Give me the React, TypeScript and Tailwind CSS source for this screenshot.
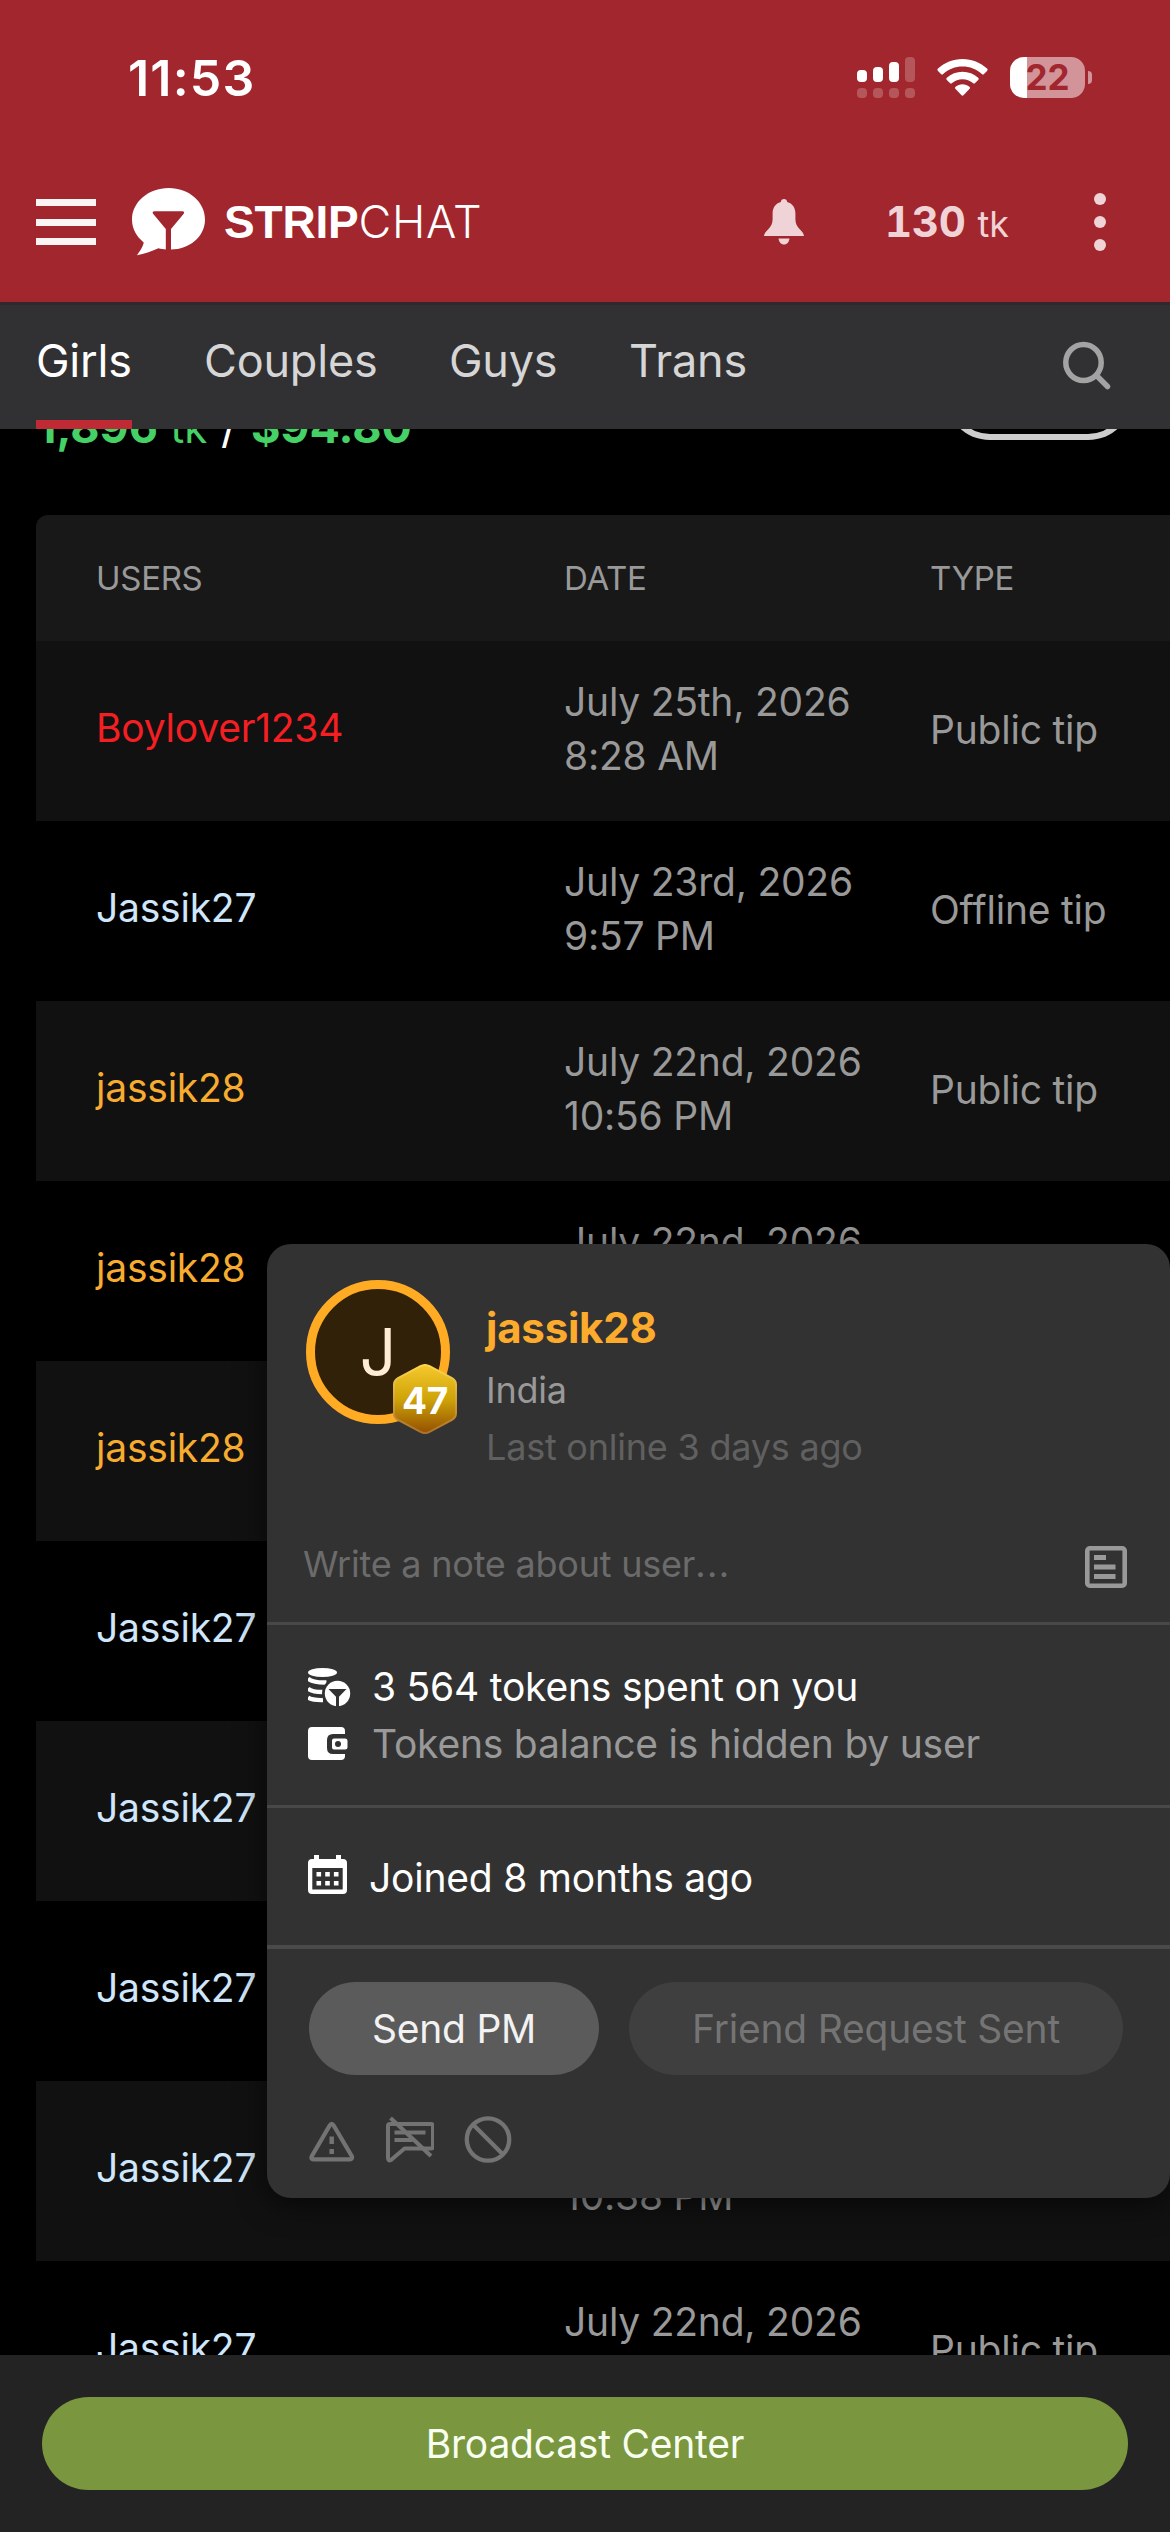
import React from "react";

type Row = { user: string; color: string; day: string; time: string; type: string };

const RED = "text-[#f41f22]";
const BLUE = "text-[#cfe6fb]";
const GOLD = "text-[#f7ac2f]";

const rows: Row[] = [
  { user: "Boylover1234", color: RED, day: "July 25th, 2026", time: "8:28 AM", type: "Public tip" },
  { user: "Jassik27", color: BLUE, day: "July 23rd, 2026", time: "9:57 PM", type: "Offline tip" },
  { user: "jassik28", color: GOLD, day: "July 22nd, 2026", time: "10:56 PM", type: "Public tip" },
  { user: "jassik28", color: GOLD, day: "July 22nd, 2026", time: "", type: "" },
  { user: "jassik28", color: GOLD, day: "", time: "", type: "" },
  { user: "Jassik27", color: BLUE, day: "", time: "", type: "" },
  { user: "Jassik27", color: BLUE, day: "", time: "", type: "" },
  { user: "Jassik27", color: BLUE, day: "", time: "", type: "" },
  { user: "Jassik27", color: BLUE, day: "", time: "10:38 PM", type: "" },
  { user: "Jassik27", color: BLUE, day: "July 22nd, 2026", time: "", type: "Public tip" },
];

function Signal() {
  return (
    <svg className="block h-[42px] w-[58px]" viewBox="0 0 58 42" fill="#fff">
      <rect x="0" y="13" width="10" height="12" rx="4" />
      <rect x="16" y="10" width="10" height="15" rx="4" />
      <rect x="32" y="5" width="10" height="20" rx="4" />
      <g opacity=".22">
        <rect x="48" y="0" width="10" height="25" rx="4" />
        <rect x="0" y="31" width="10" height="10" rx="4" />
        <rect x="16" y="31" width="10" height="10" rx="4" />
        <rect x="32" y="31" width="10" height="10" rx="4" />
        <rect x="48" y="31" width="10" height="10" rx="4" />
      </g>
    </svg>
  );
}

function Wifi() {
  return (
    <svg className="block h-[37px] w-[51px]" viewBox="0 0 51 37" fill="#fff">
      <path d="M25.500 0C35 0 43.500 3.600 50 9.500q1.200 1.200 0 2.400l-3 3q-1 1-2.200 0C39.500 10.200 32.900 7.600 25.500 7.600S11.500 10.200 6.200 14.900q-1.200 1-2.200 0l-3-3q-1.200-1.200 0-2.400C7.500 3.600 16 0 25.500 0Z" />
      <path d="M25.500 12.700c6 0 11.500 2.200 15.700 6q1.200 1.200 0 2.300l-3.100 3q-1 1-2.200 0C33 21.600 29.500 20.200 25.500 20.200S18 21.600 15.100 24q-1.200 1-2.200 0l-3.100-3q-1.200-1.100 0-2.300c4.200-3.800 9.700-6 15.700-6Z" />
      <path d="M25.500 25.300c2.600 0 5 .9 6.900 2.500q1.200 1.100 0 2.300l-5.700 6q-1.200 1.200-2.400 0l-5.700-6q-1.200-1.200 0-2.300c1.900-1.600 4.300-2.500 6.900-2.500Z" />
    </svg>
  );
}

function Logo() {
  return (
    <svg className="block h-[68px] w-[74px]" viewBox="0 0 74 68">
      <path
        fill="#fff"
        d="M36.700 0C57 0 73 14 73 31.500S57 61.500 39 61.500V41L51.500 26c1.200-1.600.6-2.800-1.200-2.800H22.500c-1.800 0-2.500 1.200-1.200 2.800L33.800 41v20.500c-2-.2-5-.7-7.400-1.300C19 63.500 12.500 66 5 67.200c2.500-3.700 6-8.500 6.700-12.800C4.500 48.500 0 41 0 31.500 0 14 16.500 0 36.700 0Z"
      />
    </svg>
  );
}

function Bell() {
  return (
    <svg className="block h-[46px] w-[42px]" viewBox="0 0 42 46" fill="#efd3d6">
      <path d="M21 0c1.900 0 3 1.300 3.200 3 5.300 1.600 8 5.500 8.200 11v6.500c.2 4.500 1.600 7 4.600 10 2.500 2.400 3.700 4 4 6.500H1c.3-2.500 1.500-4.100 4-6.500 3-3 4.400-5.500 4.600-10V14c.2-5.500 2.900-9.400 8.200-11C18 1.300 19.100 0 21 0Z" />
      <path d="M15.500 39.500h11c-.5 3.700-2.500 6-5.500 6s-5-2.300-5.500-6Z" />
    </svg>
  );
}

function StatusBar() {
  return (
    <div className="flex h-[144px] items-start justify-between pl-[128px] pr-[78px] text-white">
      <span className="mt-[48px] text-[50px] font-semibold leading-[60px] tracking-[1.2px]">11:53</span>
      <div className="mt-[57px] flex items-start">
        <Signal />
        <div className="ml-[22px] mt-[2px]">
          <Wifi />
        </div>
        <div className="ml-[22px] h-[41px] w-[75px] rounded-[14px] bg-[linear-gradient(90deg,#fff_17px,#d29399_17px)] text-center text-[35px] font-bold leading-[41px] text-[#a1262d]">
          22
        </div>
        <div className="ml-[3px] mt-[14px] h-[13px] w-[4px] rounded-r-full bg-[#d29399]" />
      </div>
    </div>
  );
}

function TopBar() {
  return (
    <div className="flex h-[158px] items-start pl-9">
      <div className="mt-[55px] flex w-[60px] flex-col gap-[12.5px]">
        <i className="h-[7px] bg-[#fbf4f4]" />
        <i className="h-[7px] bg-[#fbf4f4]" />
        <i className="h-[7px] bg-[#fbf4f4]" />
      </div>
      <div className="ml-9 mt-[44px]">
        <Logo />
      </div>
      <div className="ml-[18px] mt-[51px] w-[270px] whitespace-nowrap font-['Liberation_Sans'] text-[46px] leading-[54px] text-white">
        <span className="font-bold tracking-[-0.2px]">STRIP</span>
        <span className="font-['Inter'] text-[45px] font-light tracking-[0.7px]">CHAT</span>
      </div>
      <div className="ml-[269px] mt-[55px]">
        <Bell />
      </div>
      <div className="ml-[80px] mt-[51px] w-[124px] whitespace-nowrap leading-[54px] text-[#efd3d6]">
        <span className="text-[42px] font-bold tabular-nums tracking-[-0.3px]">130</span>
        <span className="ml-[12px] text-[36px]">tk</span>
      </div>
      <div className="ml-[85px] mt-[49px] flex flex-col gap-[11px]">
        <i className="size-[12px] rounded-full bg-[#efd3d6]" />
        <i className="size-[12px] rounded-full bg-[#efd3d6]" />
        <i className="size-[12px] rounded-full bg-[#efd3d6]" />
      </div>
    </div>
  );
}

function Nav() {
  return (
    <nav className="relative z-10 flex h-[127px] shrink-0 items-start border-t-[3px] border-[#30282b] bg-[#313133] px-9 text-[45px] leading-[54px] tracking-[-0.2px] text-[#d6d6d6]">
      <div className="mr-[72px] flex h-[124px] w-[96px] flex-col justify-between whitespace-nowrap pt-[29px] text-white">
        <span>Girls</span>
        <i className="h-[9px] bg-[#c02a35]" />
      </div>
      <span className="mt-[29px] w-[245px]">Couples</span>
      <span className="mt-[29px] w-[180px]">Guys</span>
      <span className="mt-[29px]">Trans</span>
      <svg className="ml-auto mr-[23px] mt-[35px] h-[50px] w-[50px]" viewBox="0 0 50 50" fill="none" stroke="#a3a3a4" strokeWidth="5.500" strokeLinecap="round">
        <ellipse cx="22.500" cy="22.500" rx="17.700" ry="18" />
        <path d="M36 36 46.500 46.500" />
      </svg>
    </nav>
  );
}

function Earnings() {
  return (
    <div className="flex h-[165px] items-start justify-between pl-[37px] pr-[37px]">
      <div className="mt-[50px] whitespace-nowrap text-[45px] leading-[54px] text-[#45d166]">
        <b>1,896</b> <span className="text-[42px]">tk</span> <span className="ml-px mr-px text-white">/</span> <b>$94.80</b>
      </div>
      <div className="h-[90px] w-[188px] rounded-[48px] border-[6px] border-[#cccccc]" />
    </div>
  );
}

function Table() {
  return (
    <div className="ml-9 overflow-hidden rounded-tl-[12px]">
      <div className="flex h-[126px] items-center bg-[#181818] pl-[60px] pt-[2px] text-[33px] tracking-[-0.3px] text-[#999999]">
        <span className="w-[468px]">USERS</span>
        <span className="w-[366px]">DATE</span>
        <span>TYPE</span>
      </div>
      {rows.map((r, i) => (
        <div key={i} className={`flex h-[180px] items-center pl-[60px] text-[39px] leading-[54px] tracking-[-0.22px] text-[#999999] ${i % 2 ? "bg-black" : "bg-[#111111]"}`}>
          <span className={`w-[468px] pb-[6px] ${r.color}`}>{r.user}</span>
          <div className="flex w-[366px] flex-col whitespace-nowrap pb-[4px]">
            <span className="h-[54px]">{r.day}</span>
            <span className="h-[54px]">{r.time}</span>
          </div>
          <span className="whitespace-nowrap pb-[3px]">{r.type}</span>
        </div>
      ))}
    </div>
  );
}

function Coins() {
  return (
    <svg className="block h-[40px] w-[44px]" viewBox="0 0 44 40">
      <ellipse cx="14.500" cy="4.500" rx="14.500" ry="4.500" fill="#fff" />
      <g fill="none" stroke="#fff" strokeWidth="4.300">
        <path d="M0 10.500c3 3 8.500 4.200 18.500 4" />
        <path d="M0 20.500c3 2.700 8 3.600 15 3.500" />
        <path d="M0 29.500c3 2 7 2.700 15 2.500" />
      </g>
      <circle cx="29.500" cy="25.500" r="15.500" fill="#323232" />
      <circle cx="29.500" cy="25.500" r="12.700" fill="#fff" />
      <path d="M20.500 21h18L31 28.700V39h-3V28.700Z" fill="#323232" />
    </svg>
  );
}

function Wallet() {
  return (
    <svg className="block h-[34px] w-[40px]" viewBox="0 0 40 34">
      <path fill="#fff" d="M4 0h29q4 0 4 4v3H25q-6 0-6 6v8q0 6 6 6h12v2q0 4-4 4H4q-4 0-4-4V4q0-4 4-4Z" />
      <path fill="#fff" fillRule="evenodd" d="M26 11.500h11q2.500 0 2.500 2.500v6q0 2.500-2.500 2.500H26q-2 0-2-2v-7q0-2 2-2Zm4 2.500a3 3 0 1 0 0 6 3 3 0 0 0 0-6Z" />
    </svg>
  );
}

function Calendar() {
  return (
    <svg className="block h-[39px] w-[39px]" viewBox="0 0 39 39">
      <path fill="#fff" fillRule="evenodd" d="M6 0h5v4h17V0h5v4h2q4 0 4 4v27q0 4-4 4H4q-4 0-4-4V8q0-4 4-4h2Zm-1.700 13v21.500h30.400V13Z" />
      <path fill="#fff" d="M8.500 17h4.600v4.500H8.500Zm8.700 0h4.600v4.500h-4.600Zm8.700 0h4.600v4.500h-4.600ZM8.500 26h4.600v4.500H8.500Zm8.700 0h4.600v4.500h-4.600Zm8.700 0h4.600v4.500h-4.600Z" />
    </svg>
  );
}

function UserCard() {
  return (
    <section className="absolute left-[267px] top-[1244px] z-20 h-[954px] w-[903px] rounded-[24px] bg-[#323232] tracking-[-0.22px] shadow-[0_6px_30px_rgba(0,0,0,0.6)]">
      <div className="flex h-[264px] pl-[39px] pt-9">
        <div className="relative flex size-[144px] items-center justify-center rounded-full border-[9px] border-[#ffab24] bg-[#312108] text-[64px] text-[#ffedd6]">
          J
          <svg className="absolute left-[78px] top-[75px] h-[70px] w-[64px]" viewBox="0 0 64 70">
            <defs>
              <linearGradient id="level" x1="0" y1="0" x2="0" y2="1">
                <stop offset="0" stopColor="#f5c92e" />
                <stop offset=".5" stopColor="#cfa409" />
                <stop offset="1" stopColor="#945000" />
              </linearGradient>
              <linearGradient id="rim" x1="0" y1="0" x2="0" y2="1">
                <stop offset="0" stopColor="#ffd84a" />
                <stop offset="1" stopColor="#a9712a" />
              </linearGradient>
            </defs>
            <path d="M27.500 2.200q4.500-2.400 9 0L59 14.200q4 2.300 4 6.500v28.600q0 4.200-4 6.500L36.500 67.800q-4.500 2.400-9 0L5 55.800q-4-2.300-4-6.500V20.700q0-4.200 4-6.500Z" fill="url(#level)" stroke="url(#rim)" strokeWidth="2" />
          </svg>
          <span className="absolute left-[78px] top-[75px] w-[64px] text-center text-[37px] font-bold leading-[74px] text-white">47</span>
        </div>
        <div className="ml-9 flex flex-col text-[36px] leading-[54px]">
          <span className="mt-[21px] text-[42px] font-bold text-[#fcab2c]">jassik28</span>
          <span className="mt-[8px] text-[#999999]">India</span>
          <span className="mt-[3px] text-[#606060]">Last online 3 days ago</span>
        </div>
      </div>
      <div className="flex h-[117px] items-start justify-between border-b-[3px] border-[#484848] pl-9 pr-[43px] text-[36px] leading-[54px] text-[#6b6b6b]">
        <span className="mt-[29px]">
          Write a note about user<span className="tracking-[1.4px]">...</span>
        </span>
        <svg className="mt-[38px] h-[42px] w-[42px]" viewBox="0 0 42 42" fill="none" stroke="#999">
          <rect x="2.300" y="2.300" width="37.400" height="37.400" rx="2.500" strokeWidth="4.600" />
          <path d="M9 11.500h12M9 21h21.500M9 30.500h21.500" strokeWidth="4.800" />
        </svg>
      </div>
      <div className="h-[183px] border-b-[3px] border-[#484848] pl-[41px] pt-[33px] text-[39px] leading-[57px]">
        <div className="flex items-center text-white">
          <div className="w-[64px] pt-[2px]">
            <Coins />
          </div>
          <span>3 564 tokens spent on you</span>
        </div>
        <div className="flex items-center text-[#999999]">
          <div className="w-[64px]">
            <Wallet />
          </div>
          <span>Tokens balance is hidden by user</span>
        </div>
      </div>
      <div className="flex h-[141px] items-center border-b-[4px] border-[#4a4a4a] pl-[41px] text-[39px] text-white">
        <div className="w-[61px] pb-[4px]">
          <Calendar />
        </div>
        <span className="pt-[3px]">Joined 8 months ago</span>
      </div>
      <div className="flex gap-[30px] pl-[42px] pt-[33px] text-[39px] leading-[93px]">
        <div className="h-[93px] w-[290px] rounded-full bg-[#5b5b5b] text-center text-[#f2f2f2]">Send PM</div>
        <div className="h-[93px] w-[494px] rounded-full bg-[#3f3f3f] text-center text-[#747474]">Friend Request Sent</div>
      </div>
      <div className="flex pl-[42px] pt-[40px]">
        <svg className="h-[48px] w-[46px]" viewBox="0 0 46 48" fill="none" stroke="#737373" strokeWidth="4.300" strokeLinejoin="round">
          <path d="M20.700 10.500q2-3.300 4 0l18 30.500q1.200 3.300-2 3.300H4.500q-3 0-1.600-3.300Z" />
          <path d="M22.700 21.500v7.500M22.700 34v5" strokeWidth="4.500" />
        </svg>
        <svg className="ml-[31px] h-[48px] w-[48px]" viewBox="0 0 48 48" fill="none" stroke="#737373" strokeWidth="4">
          <path d="M2 42.500V11q0-2 2-2h41q2 0 2 2v20.500q0 2-2 2H18.500L5 45q-3 1.500-3-2.500Z" strokeLinejoin="round" />
          <path d="M8.500 17.500h31M8.500 25h18" />
          <path d="M4.500 3 45 41" />
        </svg>
        <svg className="ml-[30px] h-[48px] w-[48px]" viewBox="0 0 48 48" fill="none" stroke="#737373" strokeWidth="4.300">
          <circle cx="24" cy="24.500" r="21.200" />
          <path d="M9 9.500 39 39.500" />
        </svg>
      </div>
    </section>
  );
}

export default function App() {
  return (
    <div className="relative flex h-[2532px] w-[1170px] flex-col overflow-hidden bg-black font-['Inter',sans-serif]">
      <header className="h-[302px] shrink-0 bg-[#a1262d]">
        <StatusBar />
        <TopBar />
      </header>
      <Nav />
      <main className="-mt-[79px] min-h-0 flex-1 overflow-hidden">
        <Earnings />
        <Table />
      </main>
      <UserCard />
      <footer className="relative z-10 h-[177px] shrink-0 bg-[#232323] px-[42px] pt-[42px]">
        <div className="h-[93px] rounded-full bg-[#7a963f] text-center text-[39px] leading-[93px] tracking-[-0.22px] text-[#f8fff0]">Broadcast Center</div>
      </footer>
    </div>
  );
}
